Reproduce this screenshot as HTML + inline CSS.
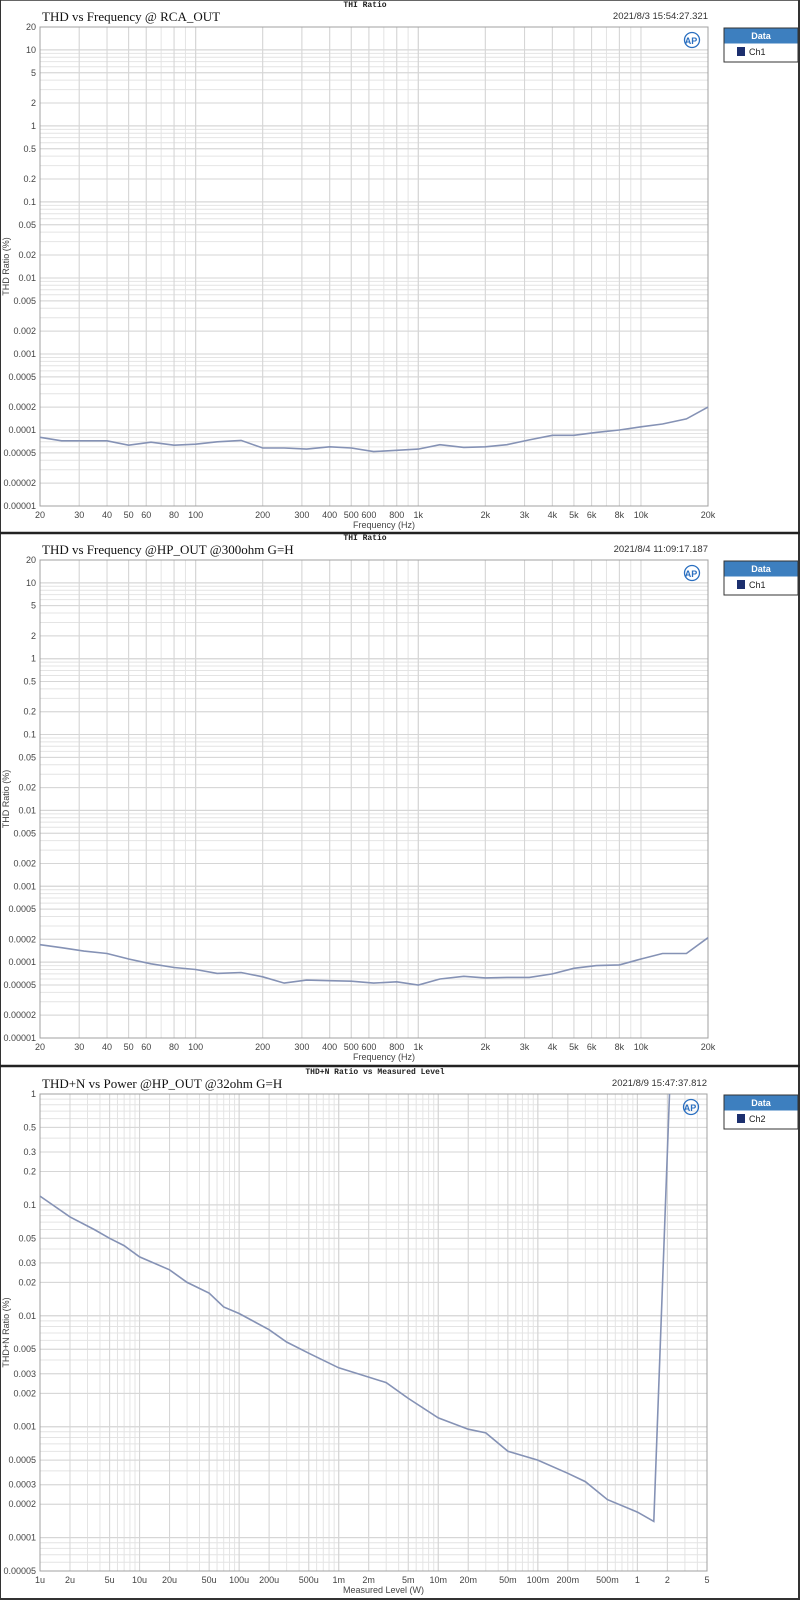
<!DOCTYPE html>
<html><head><meta charset="utf-8">
<style>
html,body{margin:0;padding:0;background:#fff;}
body{width:800px;height:1600px;overflow:hidden;position:relative;}
svg{position:absolute;left:0;top:0;}
</style></head>
<body>
<svg id="s" width="800" height="1600" xmlns="http://www.w3.org/2000/svg" font-family="Liberation Sans, sans-serif"></svg>
<script>
const S=document.getElementById('s');
let h='';
function L(x1,y1,x2,y2,c,w){h+=`<line x1="${x1}" y1="${y1}" x2="${x2}" y2="${y2}" stroke="${c}" stroke-width="${w}"/>`;}
function T(x,y,t,o){o=o||{};h+=`<text x="${x}" y="${y}" font-size="${o.fs||9}" fill="${o.c||'#444'}" text-anchor="${o.a||'middle'}" ${o.ff?`font-family="${o.ff}"`:''} ${o.tr?`transform="${o.tr}"`:''} ${o.fw?`font-weight="${o.fw}"`:''}>${t}</text>`;}
function panel(p){
 const {x0,x1,y0,y1,xmin,xmax,ymin,ymax}=p;
 const lx=v=>x0+(Math.log10(v)-Math.log10(xmin))/(Math.log10(xmax)-Math.log10(xmin))*(x1-x0);
 const ly=v=>y0+(Math.log10(ymax)-Math.log10(v))/(Math.log10(ymax)-Math.log10(ymin))*(y1-y0);
 // grid
 for(let d=Math.floor(Math.log10(ymin));d<=Math.ceil(Math.log10(ymax));d++){for(let k=1;k<10;k++){const v=k*Math.pow(10,d);if(v<ymin*0.999||v>ymax*1.001)continue;const y=ly(v);L(x0,y,x1,y,k==1?'#cfcfcf':'#e4e4e4',1);}}
 for(let d=Math.floor(Math.log10(xmin));d<=Math.ceil(Math.log10(xmax));d++){for(let k=1;k<10;k++){const v=k*Math.pow(10,d);if(v<xmin*0.999||v>xmax*1.001)continue;const x=lx(v);L(x,y0,x,y1,k==1?'#cfcfcf':'#e4e4e4',1);}}
 p.yl.forEach(v=>{const y=ly(v);L(x0,y,x1,y,'#d6d6d6',1);T(x0-4,y+3,String(v),{a:'end'});});
 p.xl.forEach(a=>{const x=lx(a[0]);L(x,y0,x,y1,'#d6d6d6',1);T(x,y1+12,a[1]);});
 h+=`<rect x="${x0}" y="${y0}" width="${x1-x0}" height="${y1-y0}" fill="none" stroke="#a0a0a0" stroke-width="1"/>`;
 // curve
 h+=`<polyline fill="none" stroke="#8592b5" stroke-width="1.6" points="${p.d.map(q=>lx(q[0]).toFixed(1)+','+ly(q[1]).toFixed(1)).join(' ')}"/>`;
 // titles
 T(x0+2,y0-6,p.title,{a:'start',fs:13,c:'#111',ff:'Liberation Serif, serif'});
 T(x1,y0-8,p.ts,{a:'end',fs:9.5,c:'#333'});
 T(p.hx,y0-20,p.hdr,{fs:8,c:'#222',ff:'Liberation Mono, monospace',fw:'bold'});
 T((x0+x1)/2+10,y1+22,p.xt,{fs:9});
 T(9,(y0+y1)/2,p.yt,{fs:9,tr:`rotate(-90 9 ${(y0+y1)/2})`});
 // AP logo
 h+=`<circle cx="${x1-16}" cy="${y0+13}" r="7.5" fill="none" stroke="#2a6fc0" stroke-width="1.3"/>`;
 T(x1-17,y0+17,'AP',{fs:9,c:'#2a6fc0',fw:'bold',ff:'Liberation Sans, sans-serif'});
 // legend
 const ly0=y0+1;
 h+=`<rect x="724" y="${ly0}" width="74" height="34" fill="#fff" stroke="#333" stroke-width="1"/>`;
 h+=`<rect x="724.5" y="${ly0+0.5}" width="73" height="15" fill="#3d7fbf"/>`;
 T(761,ly0+11,'Data',{fs:9,c:'#fff',fw:'bold'});
 h+=`<rect x="737" y="${ly0+19}" width="8" height="9" fill="#1c2f6e"/>`;
 T(749,ly0+27,p.ch,{a:'start',fs:9,c:'#222'});
}
const fx=[[20,'20'],[30,'30'],[40,'40'],[50,'50'],[60,'60'],[80,'80'],[100,'100'],[200,'200'],[300,'300'],[400,'400'],[500,'500'],[600,'600'],[800,'800'],[1000,'1k'],[2000,'2k'],[3000,'3k'],[4000,'4k'],[5000,'5k'],[6000,'6k'],[8000,'8k'],[10000,'10k'],[20000,'20k']];
const fy=[20,10,5,2,1,0.5,0.2,0.1,0.05,0.02,0.01,0.005,0.002,0.001,0.0005,0.0002,0.0001,0.00005,0.00002,0.00001];
const F=[20,25,31.5,40,50,63,80,100,125,160,200,250,315,400,500,630,800,1000,1250,1600,2000,2500,3150,4000,5000,6300,8000,10000,12500,16000,20000];
const d1v=[8e-5,7.2e-5,7.2e-5,7.2e-5,6.3e-5,6.9e-5,6.3e-5,6.5e-5,7e-5,7.3e-5,5.8e-5,5.8e-5,5.6e-5,6e-5,5.8e-5,5.2e-5,5.4e-5,5.6e-5,6.4e-5,5.9e-5,6e-5,6.4e-5,7.4e-5,8.5e-5,8.5e-5,9.3e-5,1e-4,1.1e-4,1.2e-4,1.4e-4,2e-4];
const d2v=[1.7e-4,1.55e-4,1.4e-4,1.3e-4,1.1e-4,9.5e-5,8.5e-5,8e-5,7.1e-5,7.3e-5,6.4e-5,5.3e-5,5.8e-5,5.7e-5,5.6e-5,5.3e-5,5.5e-5,5e-5,6e-5,6.5e-5,6.2e-5,6.3e-5,6.3e-5,7e-5,8.3e-5,9e-5,9.2e-5,1.1e-4,1.3e-4,1.3e-4,2.1e-4];
panel({x0:40,x1:708,y0:27,y1:506,xmin:20,xmax:20000,ymin:1e-5,ymax:20,yl:fy,xl:fx,d:F.map((f,i)=>[f,d1v[i]]),title:'THD vs Frequency @ RCA_OUT',ts:'2021/8/3 15:54:27.321',hdr:'THI Ratio',hx:365,xt:'Frequency (Hz)',yt:'THD Ratio (%)',ch:'Ch1'});
panel({x0:40,x1:708,y0:560,y1:1038,xmin:20,xmax:20000,ymin:1e-5,ymax:20,yl:fy,xl:fx,d:F.map((f,i)=>[f,d2v[i]]),title:'THD vs Frequency @HP_OUT @300ohm G=H',ts:'2021/8/4 11:09:17.187',hdr:'THI Ratio',hx:365,xt:'Frequency (Hz)',yt:'THD Ratio (%)',ch:'Ch1'});
const px=[[1e-6,'1u'],[2e-6,'2u'],[5e-6,'5u'],[1e-5,'10u'],[2e-5,'20u'],[5e-5,'50u'],[1e-4,'100u'],[2e-4,'200u'],[5e-4,'500u'],[1e-3,'1m'],[2e-3,'2m'],[5e-3,'5m'],[1e-2,'10m'],[2e-2,'20m'],[5e-2,'50m'],[0.1,'100m'],[0.2,'200m'],[0.5,'500m'],[1,'1'],[2,'2'],[5,'5']];
const py=[1,0.5,0.3,0.2,0.1,0.05,0.03,0.02,0.01,0.005,0.003,0.002,0.001,0.0005,0.0003,0.0002,0.0001,0.00005];
const d3=[[1e-6,0.12],[2e-6,0.078],[3.5e-6,0.06],[5e-6,0.05],[7e-6,0.043],[1e-5,0.034],[2e-5,0.026],[3e-5,0.02],[5e-5,0.016],[7e-5,0.012],[1e-4,0.0105],[2e-4,0.0075],[3e-4,0.0058],[5e-4,0.0046],[1e-3,0.0034],[2e-3,0.0028],[3e-3,0.0025],[5e-3,0.0018],[1e-2,0.0012],[2e-2,0.00095],[3e-2,0.00088],[5e-2,0.0006],[0.1,0.0005],[0.2,0.00038],[0.3,0.00032],[0.5,0.00022],[1,0.00017],[1.46,0.00014],[2.1,1]];
panel({x0:40,x1:707,y0:1094,y1:1571,xmin:1e-6,xmax:5,ymin:5e-5,ymax:1,yl:py,xl:px,d:d3,title:'THD+N vs Power @HP_OUT @32ohm G=H',ts:'2021/8/9 15:47:37.812',hdr:'THD+N Ratio vs Measured Level',hx:375,xt:'Measured Level (W)',yt:'THD+N Ratio (%)',ch:'Ch2'});
// frame & separators
L(0,0,0,1600,'#333',2);L(799,0,799,1600,'#333',2);L(0,0,800,0,'#333',1.5);L(0,1599,800,1599,'#333',2);
L(0,533,800,533,'#222',2.5);L(0,1066,800,1066,'#222',2.5);
S.innerHTML=h;
</script>
</body></html>
